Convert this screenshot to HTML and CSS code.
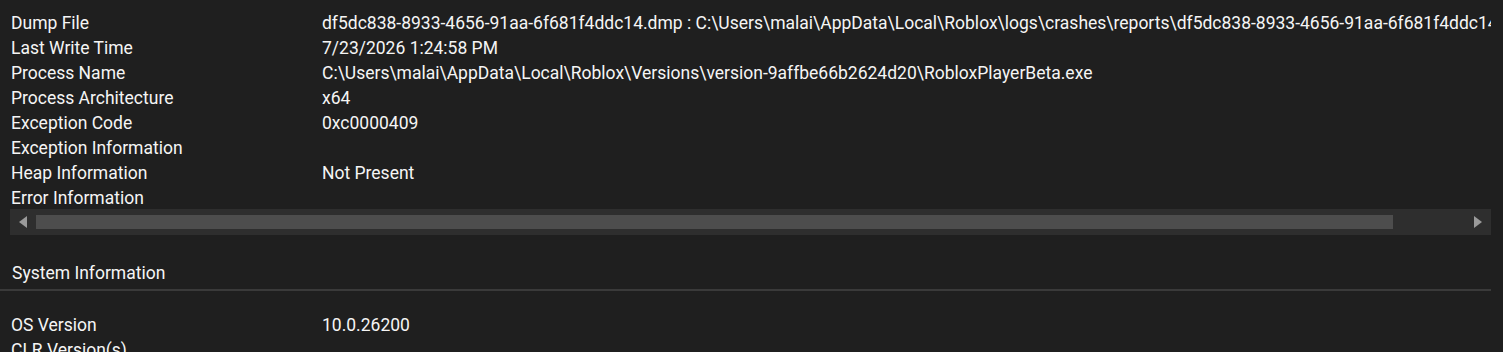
FILE: index.html
```html
<!DOCTYPE html>
<html>
<head>
<meta charset="utf-8">
<link rel="stylesheet" href="styles.css">
</head>
<body>
<div class="panel">
  <div class="props">
    <div class="row"><span class="label">Dump File</span><span class="value">df5dc838-8933-4656-91aa-6f681f4ddc14.dmp : C:\Users\malai\AppData\Local\Roblox\logs\crashes\reports\df5dc838-8933-4656-91aa-6f681f4ddc14.dmp</span></div>
    <div class="row"><span class="label">Last Write Time</span><span class="value">7/23/2026 1:24:58 PM</span></div>
    <div class="row"><span class="label">Process Name</span><span class="value">C:\Users\malai\AppData\Local\Roblox\Versions\version-9affbe66b2624d20\RobloxPlayerBeta.exe</span></div>
    <div class="row"><span class="label">Process Architecture</span><span class="value">x64</span></div>
    <div class="row"><span class="label">Exception Code</span><span class="value">0xc0000409</span></div>
    <div class="row"><span class="label">Exception Information</span><span class="value"></span></div>
    <div class="row"><span class="label">Heap Information</span><span class="value">Not Present</span></div>
    <div class="row"><span class="label">Error Information</span><span class="value"></span></div>
  </div>
  <div class="hscroll">
    <div class="arrow arrow-left"></div>
    <div class="track"><div class="thumb"></div></div>
    <div class="arrow arrow-right"></div>
  </div>
  <div class="section-header">System Information</div>
  <div class="props sys">
    <div class="row"><span class="label">OS Version</span><span class="value">10.0.26200</span></div>
    <div class="row"><span class="label">CLR Version(s)</span><span class="value"></span></div>
  </div>
</div>
</body>
</html>
```
FILE: styles.css
```css
html, body {
  margin: 0;
  padding: 0;
  background: #1f1f1f;
  overflow: hidden;
}
body {
  font-family: Roboto, "Liberation Sans", sans-serif;
  font-size: 17.5px;
  color: #f5f5f5;
}
.panel {
  width: 1491px;
  overflow: hidden;
  padding-top: 10px;
  display: flex;
  flex-direction: column;
}
.props {
  display: flex;
  flex-direction: column;
}
.row {
  display: flex;
  height: 25px;
  padding-top: 1px;
  box-sizing: border-box;
  line-height: 25px;
  white-space: nowrap;
}
.label {
  width: 322px;
  flex: none;
  padding-left: 11px;
  box-sizing: border-box;
}
.value {
  flex: none;
}
.hscroll {
  margin-left: 10px;
  height: 26px;
  background: #2e2e2e;
  display: flex;
  align-items: center;
  margin-top: -1px;
}
.arrow {
  width: 0;
  height: 0;
  border-top: 6px solid transparent;
  border-bottom: 6px solid transparent;
}
.arrow-left {
  border-right: 8px solid #9a9a9a;
  margin-left: 9px;
  margin-right: 9px;
}
.arrow-right {
  border-left: 8px solid #9a9a9a;
  margin-left: 81px;
  margin-right: 10px;
}
.track {
  flex: 1;
  height: 14px;
  display: flex;
}
.thumb {
  width: 1357px;
  height: 14px;
  background: #4d4d4d;
}
.section-header {
  height: 56px;
  padding-left: 12px;
  line-height: 26px;
  padding-top: 25px;
  box-sizing: border-box;
  border-bottom: 2px solid #3a3a3a;
}
.sys {
  padding-top: 21px;
}
```
